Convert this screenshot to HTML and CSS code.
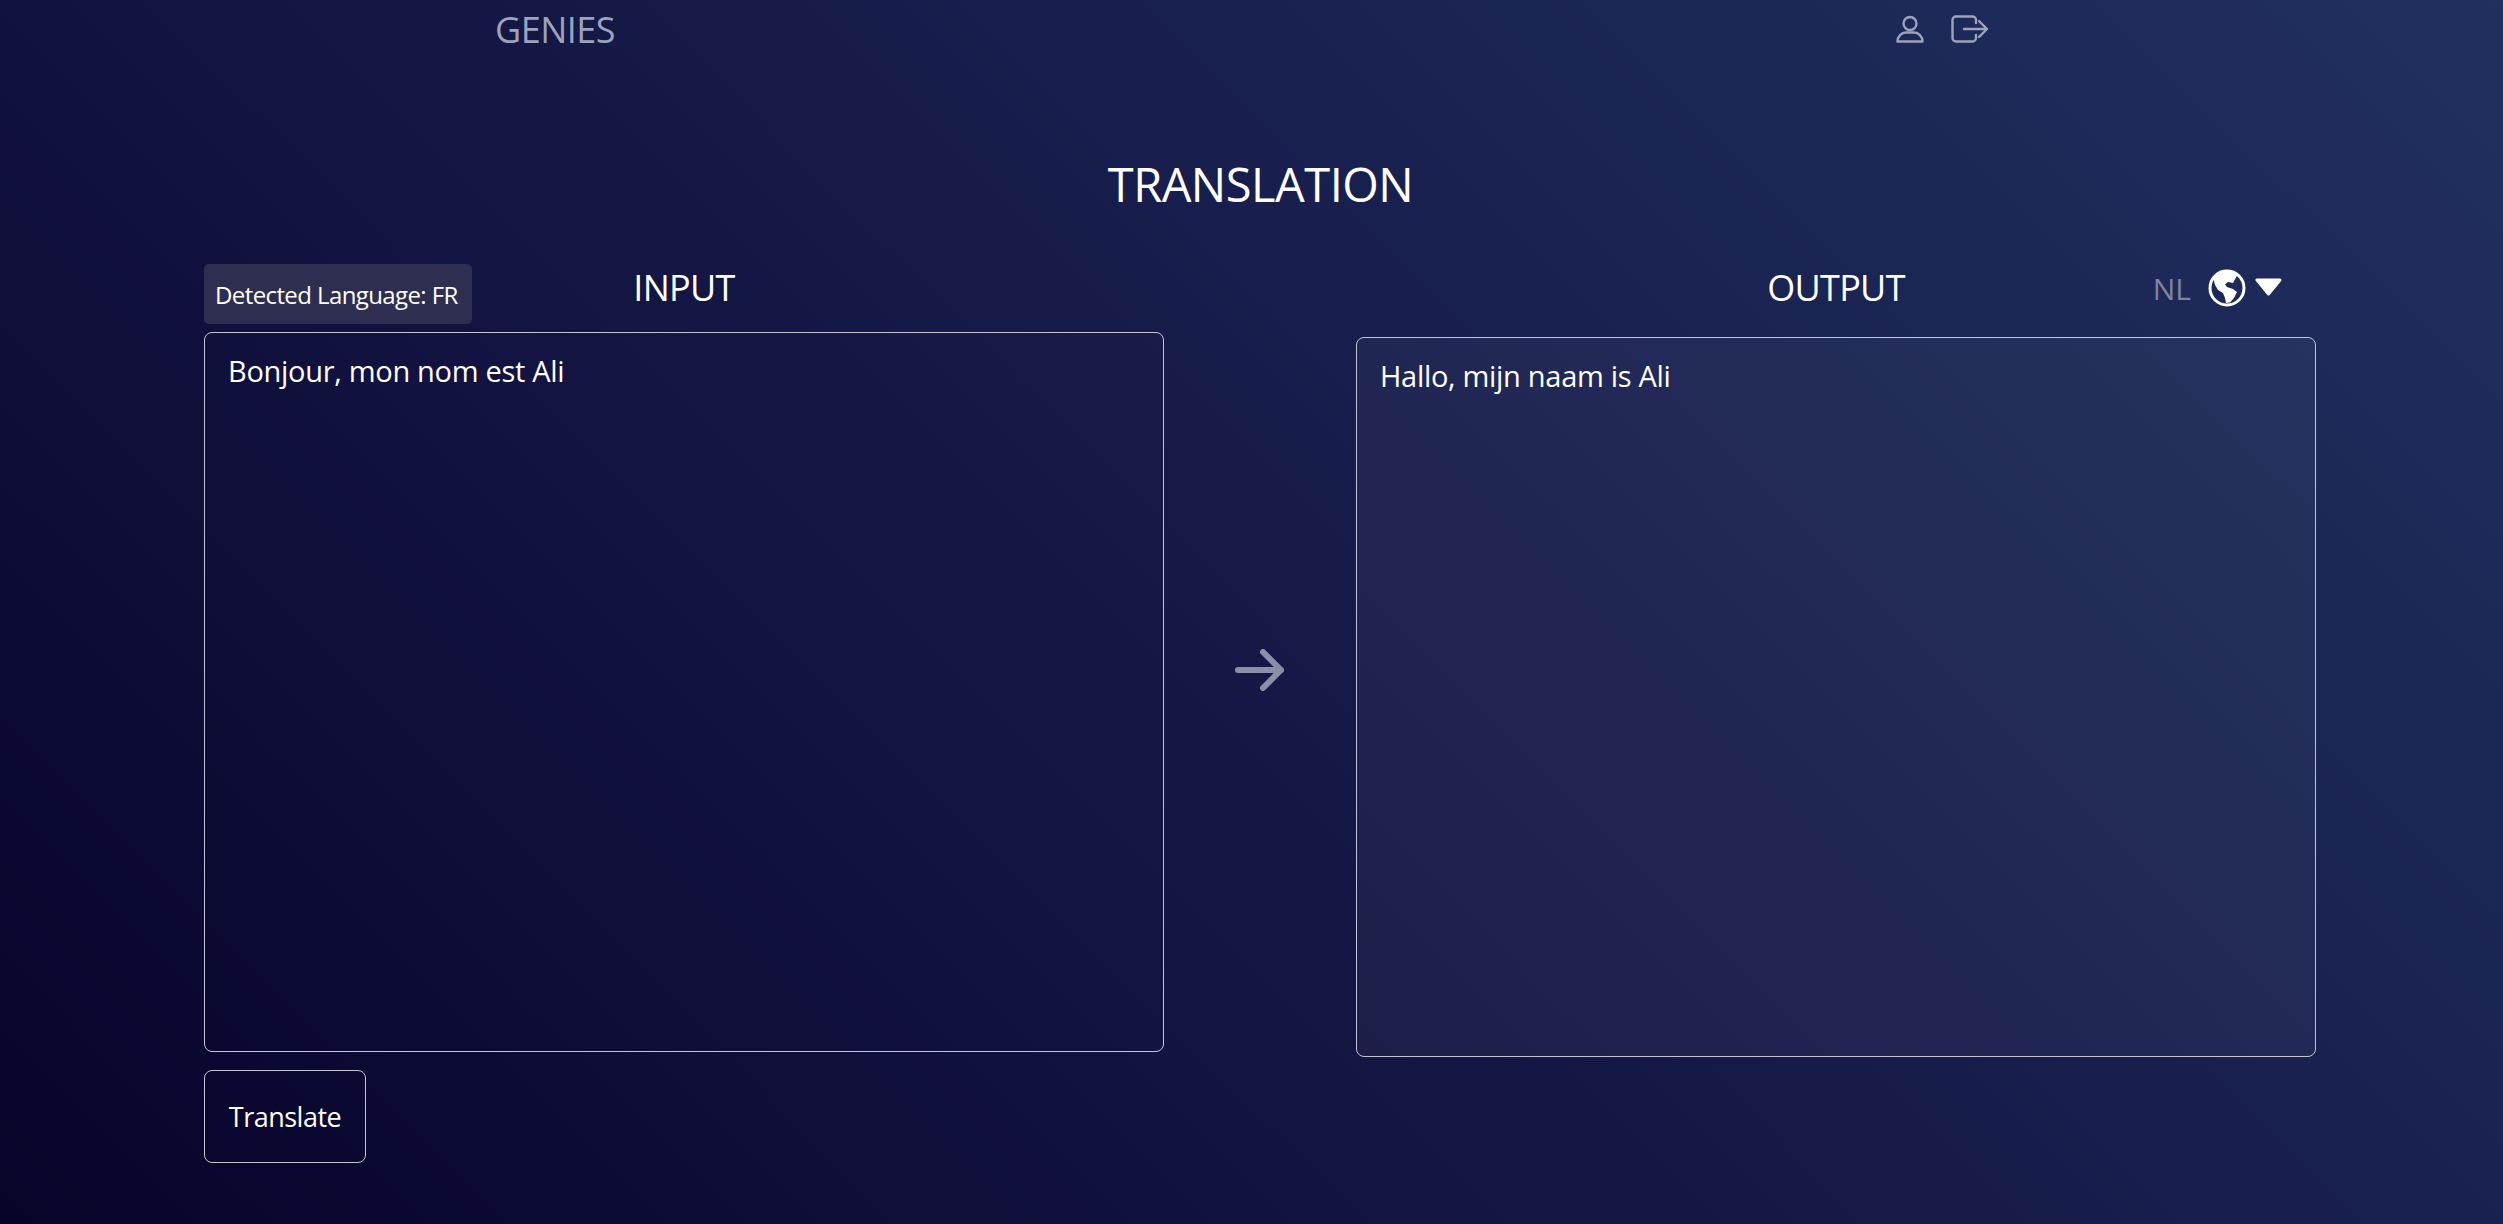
FILE: index.html
```html
<!DOCTYPE html>
<html lang="en">
<head>
    <meta charset="UTF-8">
    <meta name="viewport" content="width=device-width, initial-scale=1.0">
    <title>Genies - Translation</title>
    <link rel="stylesheet" href="styles.css">
</head>
<body>

    <header class="topbar">
        <span class="brand">GENIES</span>
        <div class="topbar-icons">
            <svg class="icon-user" viewBox="0 0 28 28" fill="none" stroke="currentColor" stroke-width="2.4" stroke-linejoin="round">
                <circle cx="14" cy="8.5" r="6.500"/>
                <path d="M1.500 26.500c0-5 4-9 8.500-9h8c4.500 0 8.500 4 8.500 9z"/>
            </svg>
            <svg class="icon-logout" viewBox="0 0 38 28" fill="none" stroke="currentColor" stroke-width="2.4" stroke-linecap="round" stroke-linejoin="round">
                <path d="M25 8V5a3.500 3.500 0 0 0-3.500-3.500H5A3.500 3.500 0 0 0 1.500 5v18A3.500 3.500 0 0 0 5 26.500h16.500A3.500 3.500 0 0 0 25 23v-3"/>
                <path d="M13 14h23M28 6l8 8-8 8"/>
            </svg>
        </div>
    </header>

    <h1 class="page-title">TRANSLATION</h1>

    <main class="panels">
        <section class="panel panel-input">
            <div class="panel-head">
                <span class="detected">Detected Language: FR</span>
                <h2>INPUT</h2>
            </div>
            <div class="text-box">Bonjour, mon nom est Ali</div>
            <button class="translate-btn">Translate</button>
        </section>

        <div class="arrow">
            <svg viewBox="0 0 49 42" fill="none" stroke="currentColor" stroke-width="6" stroke-linecap="round" stroke-linejoin="round">
                <path d="M3 21h43M28 3l18 18-18 18"/>
            </svg>
        </div>

        <section class="panel panel-output">
            <div class="panel-head">
                <h2>OUTPUT</h2>
                <div class="lang-select">
                    <span class="lang-code">NL</span>
                    <svg class="globe" viewBox="0 0 38 38">
                        <circle cx="19" cy="19" r="17" fill="none" stroke="#fff" stroke-width="3"/>
                        <path fill="#fff" d="M8 7l8-4h8l6 2-5 9-5-1-3 2.500 2 2.500 6 2 4 3-3 6-4 4.500-4 .5-1-5-2-5-5-3-3-5-1.500-6z"/>
                    </svg>
                    <svg class="caret" viewBox="0 0 27 18">
                        <path fill="#fff" stroke="#fff" stroke-width="3" stroke-linejoin="round" d="M2 2h23L13.500 16z"/>
                    </svg>
                </div>
            </div>
            <div class="text-box text-box-output">Hallo, mijn naam is Ali</div>
        </section>
    </main>

</body>
</html>
```

FILE: styles.css
```css
* {
    box-sizing: border-box;
}
html, body {
    height: 100%;
}
body {
    margin: 0;
    height: 1224px;
    overflow: hidden;
    font-family: "Open Sans", "Noto Sans", Arial, sans-serif;
    color: white;
    background: linear-gradient(45deg, #07042a 0%, #121340 36%, #192150 66%, #21305f 100%);
}

.topbar {
    display: flex;
    justify-content: space-between;
    align-items: center;
    height: 58px;
    padding: 0 514px 0 495px;
    color: #9da3bb;
}
.brand {
    font-size: 36px;
    letter-spacing: -0.5px;
}
.topbar-icons {
    display: flex;
    align-items: center;
    gap: 27px;
}
.icon-user {
    width: 28px;
    height: 28px;
}
.icon-logout {
    width: 38px;
    height: 28px;
}

.page-title {
    margin: 94px 0 0;
    padding-left: 18px;
    height: 64px;
    font-size: 47px;
    line-height: 64px;
    font-weight: 400;
    text-align: center;
    letter-spacing: -0.5px;
}

.panels {
    display: grid;
    grid-template-columns: 960px 192px 960px;
    margin: 48px 0 0 204px;
}
.panel-head {
    position: relative;
    display: flex;
    justify-content: center;
    align-items: center;
    height: 68px;
    padding-bottom: 22px;
}
.panel-output .panel-head {
    height: 73px;
    padding-bottom: 27px;
}
.panel-head h2 {
    margin: 0;
    font-size: 36px;
    font-weight: 400;
    letter-spacing: -0.7px;
}

.detected {
    position: absolute;
    left: 0;
    top: 0;
    width: 268px;
    height: 60px;
    padding-left: 11px;
    line-height: 61px;
    font-size: 24px;
    letter-spacing: -0.6px;
    white-space: nowrap;
    background: #2e2e50;
    border-radius: 5px;
}

.text-box {
    height: 720px;
    padding: 18px 23px;
    font-size: 29px;
    line-height: 40px;
    letter-spacing: -0.3px;
    border: 1.500px solid #c3c5d3;
    border-radius: 8px;
}
.text-box-output {
    background: rgba(255, 255, 255, 0.04);
}

.translate-btn {
    display: block;
    width: 162px;
    height: 93px;
    margin-top: 18px;
    padding: 0;
    font-family: inherit;
    font-size: 27px;
    line-height: 34px;
    letter-spacing: -0.5px;
    color: white;
    background: transparent;
    border: 1.500px solid #c3c5d3;
    border-radius: 8px;
    cursor: pointer;
}

.arrow {
    display: flex;
    justify-content: center;
    padding: 385px 2px 0 0;
    color: #8b8fa8;
}
.arrow svg {
    width: 49px;
    height: 42px;
}

.lang-select {
    position: absolute;
    right: 34px;
    top: 2px;
    display: flex;
    align-items: center;
    height: 44px;
}
.lang-code {
    font-size: 30px;
    color: #7d85a3;
    margin-right: 17px;
}
.globe {
    width: 38px;
    height: 38px;
    margin-right: 9px;
}
.caret {
    width: 27px;
    height: 18px;
    margin-bottom: 2px;
}
```
